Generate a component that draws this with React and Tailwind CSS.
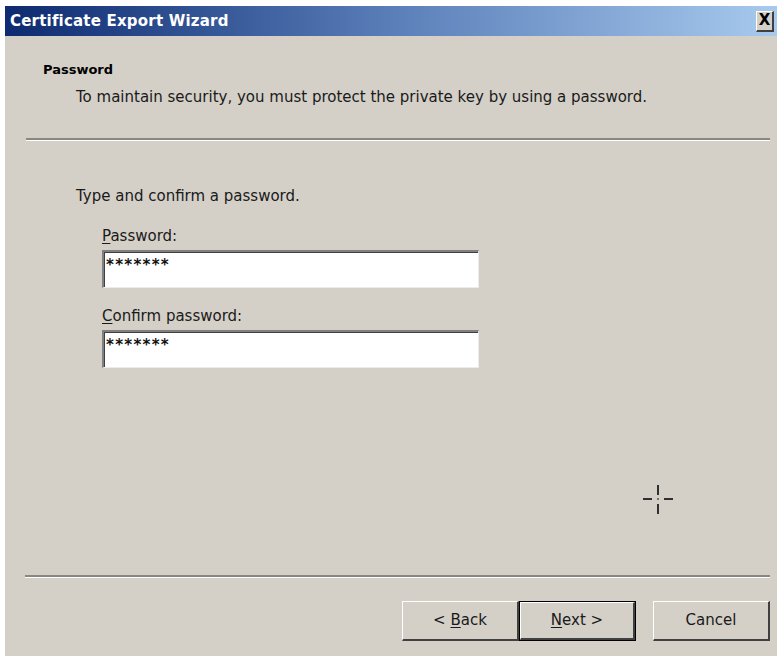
import React from "react";

const font = { fontFamily: '"DejaVu Sans", "Liberation Sans", sans-serif' };

function Mnemonic({ children, k }) {
  return (
    <span>
      <span className="underline underline-offset-2">{k}</span>
      {children}
    </span>
  );
}

function SunkenInput({ value }) {
  return (
    <div className="w-[377px] h-[38px] border-t-2 border-l-2 border-t-[#808080] border-l-[#808080] border-b border-r border-b-[#ececec] border-r-[#ececec] bg-white">
      <div className="h-full border-t border-l border-t-[#404040] border-l-[#404040] pl-[1px] pt-[3px] text-[15px] leading-[18px] tracking-[1.3px] text-[#111] font-bold">
        {value}
      </div>
    </div>
  );
}

function Button({ children, primary }) {
  const face = (
    <div className="h-full border-t border-l border-t-white border-l-white border-b-2 border-r-2 border-b-[#404040] border-r-[#404040] flex items-center justify-center text-[15px] text-[#1a1a1a]">
      {children}
    </div>
  );
  return primary ? (
    <div className="w-[117px] h-[40px] border border-black">{face}</div>
  ) : (
    <div className="w-[117px] h-[40px]">{face}</div>
  );
}

function Separator({ className }) {
  return (
    <div className={className}>
      <div className="h-[2px] bg-[#8a8780]" />
      <div className="h-[1px] bg-white" />
    </div>
  );
}

export default function App() {
  return (
    <div className="w-[784px] h-[656px] bg-white pl-[5px] pt-[6px] overflow-hidden" style={font}>
      <div className="w-[772px] h-[650px] bg-[#d4d0c8] flex flex-col">
        {/* caption bar */}
        <div className="h-[30px] flex items-center justify-between pl-[5px] pr-[3px] bg-gradient-to-r from-[#0f2a70] via-[#5a7eb8] to-[#a8caee]">
          <span className="text-white font-bold text-[15px] tracking-[0.2px]">Certificate Export Wizard</span>
          <div className="w-[18px] h-[21px] bg-[#d4d0c8] border-t border-l border-t-white border-l-white border-b-2 border-r-2 border-b-[#404040] border-r-[#404040] flex items-center justify-center text-[15px] font-bold leading-none text-black">
            X
          </div>
        </div>

        {/* wizard header */}
        <div className="pl-[38px] pt-[25px] text-[13px] font-bold leading-[18px] text-black">Password</div>
        <div className="pl-[71px] pt-[9px] text-[15px] leading-[18px] text-[#1a1a1a]">
          To maintain security, you must protect the private key by using a password.
        </div>
        <Separator className="ml-[21px] mr-[7px] mt-[32px]" />

        {/* page body */}
        <div className="pl-[71px] pt-[46px] text-[15px] leading-[18px] text-[#1a1a1a]">
          Type and confirm a password.
        </div>
        <div className="pl-[97px] pt-[22px] flex flex-col text-[15px] leading-[18px] text-[#1a1a1a]">
          <Mnemonic k="P">assword:</Mnemonic>
          <div className="mt-[5px]">
            <SunkenInput value="*******" />
          </div>
          <div className="mt-[19px]">
            <Mnemonic k="C">onfirm password:</Mnemonic>
          </div>
          <div className="mt-[5px]">
            <SunkenInput value="*******" />
          </div>
        </div>

        {/* crosshair cursor */}
        <div className="flex-1 flex justify-end pr-[101px] pt-[116px]">
          <svg width="34" height="32" viewBox="0 0 34 32">
            <g stroke="#303030" strokeWidth="2">
              <line x1="16" y1="1" x2="16" y2="11" />
              <line x1="16" y1="20" x2="16" y2="30" />
              <line x1="1" y1="15" x2="10" y2="15" />
              <line x1="22" y1="15" x2="31" y2="15" />
            </g>
            <rect x="15" y="14" width="2" height="2" fill="#707070" />
          </svg>
        </div>

        <Separator className="ml-[20px] mr-[7px]" />

        {/* navigation buttons */}
        <div className="flex justify-end pr-[7px] pt-[23px] pb-[9px] h-[78px]">
          <Button>
            <span>&lt; <Mnemonic k="B">ack</Mnemonic></span>
          </Button>
          <Button primary>
            <span><Mnemonic k="N">ext</Mnemonic> &gt;</span>
          </Button>
          <div className="w-[17px]" />
          <Button>Cancel</Button>
        </div>
      </div>
    </div>
  );
}
